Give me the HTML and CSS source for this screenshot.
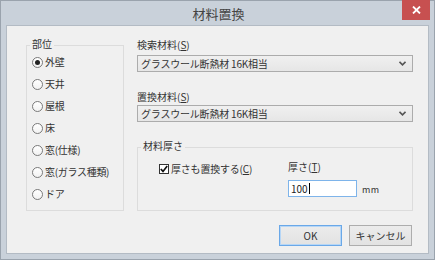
FILE: index.html
```html
<!DOCTYPE html>
<html lang="ja">
<head>
<meta charset="utf-8">
<link rel="stylesheet" href="styles.css">
</head>
<body>
<div class="window">
  <div class="titlebar">
    <div class="title">材料置換</div>
    <div class="close"><svg width="9" height="8" viewBox="0 0 9 8"><path d="M1 0.5 L8 7.5 M8 0.5 L1 7.5" stroke="#fff" stroke-width="1.8"/></svg></div>
  </div>
  <div class="client">
    <div class="main">
      <fieldset class="group parts">
        <legend>部位</legend>
        <div class="radios">
          <div class="radio"><span class="dot on"></span>外壁</div>
          <div class="radio"><span class="dot"></span>天井</div>
          <div class="radio"><span class="dot"></span>屋根</div>
          <div class="radio"><span class="dot"></span>床</div>
          <div class="radio"><span class="dot"></span>窓(仕様)</div>
          <div class="radio"><span class="dot"></span>窓(ガラス種類)</div>
          <div class="radio"><span class="dot"></span>ドア</div>
        </div>
      </fieldset>
      <div class="right">
        <div class="label first">検索材料(<u>S</u>)</div>
        <div class="combo"><span>グラスウール断熱材 16K相当</span><svg class="chev" width="7" height="5" viewBox="0 0 7 5"><path d="M0.5 0.8 L3.5 3.8 L6.5 0.8" fill="none" stroke="#555" stroke-width="1.6"/></svg></div>
        <div class="label second">置換材料(<u>S</u>)</div>
        <div class="combo combo2"><span>グラスウール断熱材 16K相当</span><svg class="chev" width="7" height="5" viewBox="0 0 7 5"><path d="M0.5 0.8 L3.5 3.8 L6.5 0.8" fill="none" stroke="#555" stroke-width="1.6"/></svg></div>
        <fieldset class="group thick">
          <legend>材料厚さ</legend>
          <div class="thickgrid">
            <div class="check"><span class="box"><svg width="8" height="8" viewBox="0 0 8 8"><path d="M0.8 4 L3 6.4 L7.2 1" fill="none" stroke="#111" stroke-width="1.7"/></svg></span>厚さも置換する(<u>C</u>)</div>
            <div class="tlabel">厚さ(<u>T</u>)</div>
            <div></div>
            <div class="inputrow"><div class="input">100<span class="caret"></span></div><span class="unit">mm</span></div>
          </div>
        </fieldset>
      </div>
    </div>
    <div class="buttons">
      <div class="btn default">OK</div>
      <div class="btn">キャンセル</div>
    </div>
  </div>
</div>
</body>
</html>
```

FILE: styles.css
```css
html, body {
  margin: 0;
  padding: 0;
}
body {
  width: 435px;
  height: 260px;
  overflow: hidden;
  font-family: "Noto Sans CJK JP", "Noto Sans", sans-serif;
  font-size: 10px;
  color: #333333;
}
.window {
  box-sizing: border-box;
  width: 435px;
  height: 260px;
  border: 1px solid #9aa3ad;
  background: #c9d1da;
  display: flex;
  flex-direction: column;
}
.titlebar {
  height: 24px;
  display: flex;
  justify-content: center;
  align-items: center;
  position: relative;
}
.title {
  font-size: 13px;
  color: #444444;
  line-height: 16px;
  margin-top: 2px;
  margin-left: 2px;
}
.close {
  position: absolute;
  top: -1px;
  right: 4px;
  width: 28px;
  height: 20px;
  background: #c75050;
  display: flex;
  align-items: center;
  justify-content: center;
}
.client {
  flex: 1;
  margin: 0 5px 5px 5px;
  border: 1px solid #b3bbc4;
  background: #f0f0f0;
  padding: 12px 15px 0 19px;
  display: flex;
  flex-direction: column;
}
.main {
  display: flex;
  gap: 13px;
  align-items: stretch;
}
.group {
  margin: 0;
  padding: 0;
  min-width: 0;
  border: 1px solid #dcdcdc;
  box-sizing: border-box;
}
.group legend {
  padding: 0 2px 4px 2px;
  margin-left: 3px;
  line-height: 11px;
}
.parts {
  width: 98px;
}
.radios {
  display: flex;
  flex-direction: column;
  gap: 8px;
  padding: 2px 0 0 5px;
}
.radio {
  display: flex;
  align-items: center;
  height: 14px;
  line-height: 14px;
  white-space: nowrap;
  letter-spacing: -0.3px;
}
.dot {
  box-sizing: border-box;
  width: 11px;
  height: 11px;
  border: 1px solid #7a7a7a;
  border-radius: 50%;
  background: linear-gradient(#ffffff, #f2f2f2);
  margin-right: 2px;
  display: flex;
  align-items: center;
  justify-content: center;
}
.dot.on::after {
  content: "";
  width: 5px;
  height: 5px;
  border-radius: 50%;
  background: #222;
}
.right {
  width: 276px;
  display: flex;
  flex-direction: column;
}
.label {
  line-height: 12px;
  height: 12px;
}
.label u {
  text-underline-offset: 1px;
}
.label.first {
  margin-top: 1px;
}
.label.second {
  margin-top: 19px;
}
.combo {
  box-sizing: border-box;
  height: 17px;
  margin-top: 4px;
  border: 1px solid #acacac;
  background: linear-gradient(#f0f0f0, #e6e6e6);
  display: flex;
  align-items: center;
  justify-content: space-between;
  padding: 0 6px 0 3px;
  line-height: 15px;
  letter-spacing: -0.2px;
}
.combo2 {
  margin-top: 2px;
}
.thick {
  margin-top: 18px;
}
.thickgrid {
  display: grid;
  grid-template-columns: 129px 1fr;
  grid-template-rows: 14px 17px;
  row-gap: 4px;
  padding: 7px 0 13px 21px;
}
.check {
  display: flex;
  align-items: center;
  line-height: 14px;
  white-space: nowrap;
  letter-spacing: -0.2px;
}
.box {
  box-sizing: border-box;
  width: 10px;
  height: 10px;
  border: 1px solid #333;
  background: #fff;
  margin-right: 2px;
  display: flex;
  align-items: center;
  justify-content: center;
}
.tlabel {
  line-height: 14px;
  margin-top: -2px;
}
.inputrow {
  display: flex;
  align-items: center;
}
.input {
  box-sizing: border-box;
  width: 69px;
  height: 17px;
  border: 1px solid #7eb4ea;
  background: #fff;
  padding-left: 2px;
  line-height: 15px;
  display: flex;
  align-items: center;
  color: #222;
}
.caret {
  width: 1px;
  height: 11px;
  background: #000;
  margin-left: 1px;
}
.unit {
  margin-left: 5px;
  margin-top: 1px;
  font-size: 9px;
  color: #333;
  letter-spacing: 0.5px;
}
.buttons {
  display: flex;
  justify-content: flex-end;
  gap: 7px;
  margin-top: 14px;
  padding-right: 1px;
}
.btn {
  box-sizing: border-box;
  width: 63px;
  height: 21px;
  border: 1px solid #adadad;
  background: linear-gradient(#ececec, #e2e2e2);
  display: flex;
  align-items: center;
  justify-content: center;
  line-height: 14px;
}
.btn.default {
  border: 1px solid #6aa8e8;
  box-shadow: inset 0 0 0 1px #b6d6f6;
}
```
